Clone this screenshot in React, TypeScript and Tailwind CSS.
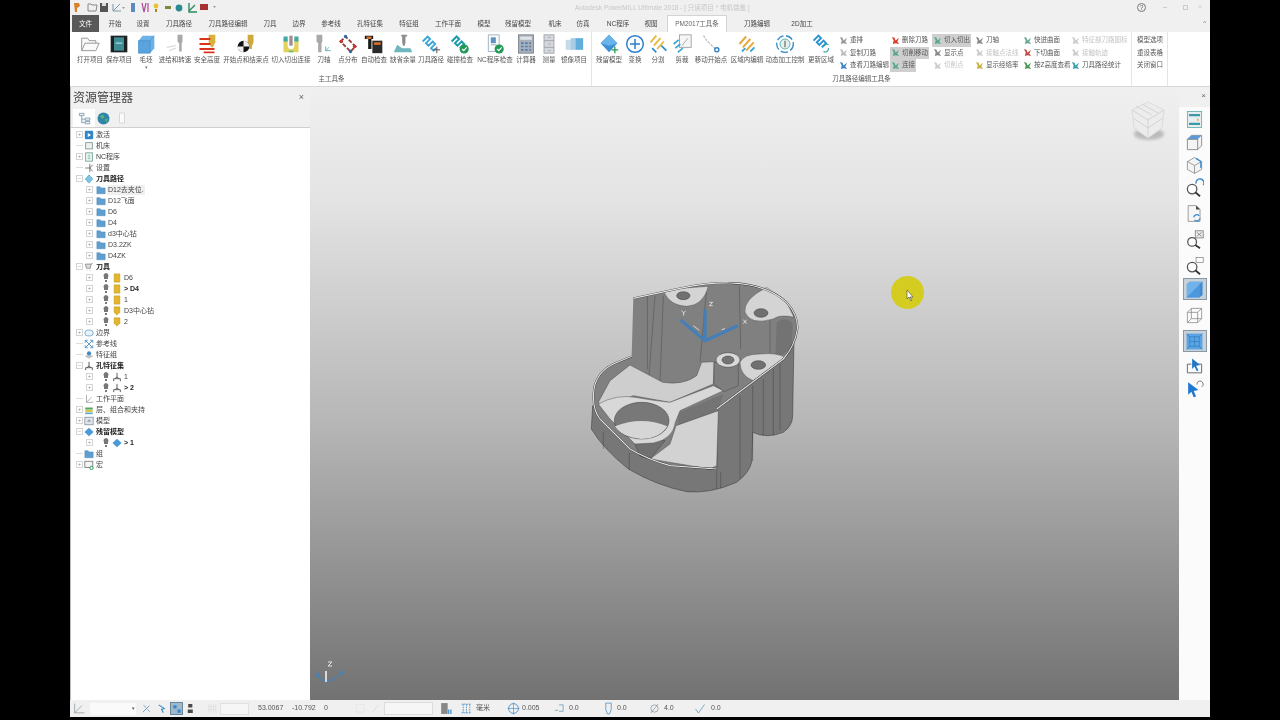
import type { ReactNode } from "react"

const tabs = [
  ["开始", 32], ["设置", 24], ["刀具路径", 48], ["刀具路径编辑", 50], ["刀具", 34], ["边界", 24], ["参考线", 40], ["孔特征集", 38],
  ["特征组", 40], ["工作平面", 38], ["模型", 34], ["残留模型", 34], ["机床", 40], ["仿真", 16],
] as const

function Svg({ s = 22, children }: { s?: number; children: ReactNode }) {
  return (
    <svg width={s} height={s} viewBox="0 0 24 24" fill="none" className="block">
      {children}
    </svg>
  )
}

const bigIcons: Record<string, ReactNode> = {
  open: <path d="M2 20V5h7l2 3h8v3M2 20l4-9h17l-4 9z" fill="#fafafa" stroke="#9a9a9a" strokeWidth="1.2" />,
  save: <g><rect x="2" y="2" width="20" height="20" fill="#1c2224" /><rect x="6" y="4" width="12" height="16" fill="#3f8c94" /><rect x="8" y="10" width="8" height="2" fill="#8cc8cc" /></g>,
  stock: <g><path d="M3 8l5-6h14v15l-5 6H3z" fill="#6cb2e6" /><path d="M3 8h14v15H3z" fill="#5aa3dc" stroke="#3d86c0" strokeWidth=".6" /><path d="M17 8l5-6" stroke="#3d86c0" strokeWidth=".6" /></g>,
  feed: <g><path d="M15 1h6v8l-1 2v10h-3V11l-2-2z" fill="#a9a9a9" /><path d="M2 16l11-2M5 20l8-3" stroke="#dcdcdc" strokeWidth="1.5" /></g>,
  safe: <g><path d="M14 1h8v9l-3 6-2 0-3-6z" fill="#d8b03a" /><path d="M3 6h13M3 12h13M3 18h18M8 22h13" stroke="#d8341c" strokeWidth="2.2" /></g>,
  start: <g><path d="M14 1h7v9l-2 5v3h-3v-3l-2-5z" fill="#cfa93c" /><circle cx="9" cy="15" r="7" fill="#111" /><path d="M9 8a7 7 0 017 7H9v7a7 7 0 01-7-7h7z" fill="#eee" /></g>,
  lead: <g><path d="M3 22V6h5v8a4 4 0 008 0V6h5v16h-5l-2-2h-4l-2 2z" fill="#e4d25c" /><path d="M3 3h5v6H3zM16 3h5v6h-5z" fill="#43a9a8" /><path d="M10 2h4v12h-4z" fill="#9b8f8f" /><path d="M9 20h6v2H9z" fill="#68b85a" /></g>,
  axis: <g><path d="M3 1h7v8l-1 2v11H5V11L3 9z" fill="#a9a9a9" /><path d="M14 20v-5M14 20h6M14 20l4-4" stroke="#4ba6a6" strokeWidth="1" /></g>,
  points: <g><path d="M3 9l6-6 12 12-6 6z" stroke="#9c3a3a" strokeWidth="2.2" strokeDasharray="5 2" /><circle cx="4" cy="9" r="2.2" fill="#c4372e" /><circle cx="20" cy="15" r="2.2" fill="#c4372e" /><circle cx="9" cy="3" r="2" fill="#2a6aa8" /><circle cx="15" cy="21" r="2" fill="#2a6aa8" /></g>,
  auto: <g><path d="M1 2h10v4H9v12H5V6H1z" fill="#1a1a1a" /><path d="M10 8h12v15H10z" fill="#2a2a2a" /><path d="M12 10h8v3h-8z" fill="#d8712a" /><path d="M3 3h6v3H3z" fill="#d8712a" /></g>,
  thick: <g><path d="M1 22l4-9 6 4h10l2 5z" fill="#6fb7bd" /><path d="M10 1h7v2h-2v7l-1 4h-2l-1-4V3h-1z" fill="#8d8d8d" /></g>,
  tp: <g><path d="M2 9l6-6 3 3-5 5 3 3 5-5 3 3-5 5 3 3 3-3" stroke="#39a6d8" strokeWidth="2.2" /><path d="M19 15v8M15 19h8" stroke="#555" strokeWidth="1.2" /></g>,
  coll: <g><path d="M2 9l6-6 3 3-5 5 3 3 5-5 3 3-5 5" stroke="#1f9aac" strokeWidth="2.4" /><circle cx="17" cy="18" r="5.5" fill="#1f9a56" /><path d="M14.5 18l2 2 3.5-4" stroke="#fff" strokeWidth="1.4" /></g>,
  nc: <g><path d="M4 1h13v20H4z" fill="#fcfcfc" stroke="#8da8bc" /><path d="M7 4h6v7H7z" fill="#5c93c0" /><path d="M7 13h7" stroke="#999" /><circle cx="17" cy="18" r="5.5" fill="#1f9a56" /><path d="M14.5 18l2 2 3.5-4" stroke="#fff" strokeWidth="1.4" /></g>,
  calc: <g><rect x="3" y="1" width="18" height="22" fill="#a8afb8" stroke="#788088" /><rect x="5" y="3" width="14" height="4" fill="#dde2e8" /><path d="M6 10h3v2H6zM11 10h3v2h-3zM16 10h2v2h-2zM6 14h3v2H6zM11 14h3v2h-3zM16 14h2v2h-2zM6 18h3v2H6zM11 18h3v2h-3zM16 18h2v2h-2z" fill="#4a7fb5" /></g>,
  measure: <g><rect x="6" y="1" width="12" height="22" fill="#d4d7dc" stroke="#9a9ea6" /><path d="M6 8h12M6 16h12M11 4h3M11 12h3M11 20h3" stroke="#9a9ea6" /></g>,
  mirror: <g><path d="M2 7h8v12H2z" fill="#c4dbe9" /><path d="M8 5h8v14H8z" fill="#a7cde4" /><path d="M14 5h9v14h-9z" fill="#62aedb" /></g>,
  model: <g><path d="M12 1l10 10-10 11L2 11z" fill="#3e8fd6" /><path d="M12 1l10 10-10 3L2 11z" fill="#6ab4ec" /><path d="M19 15v8M15 19h8" stroke="#2d9a52" strokeWidth="1.6" /></g>,
  trans: <g><circle cx="12" cy="12" r="10" fill="#fbfdff" stroke="#2c80cc" strokeWidth="1.8" /><path d="M12 6v12M6 12h12" stroke="#2c80cc" strokeWidth="1.8" /></g>,
  split: <g><path d="M3 10l7-8M7 14l8-9M11 18l8-9" stroke="#e8b83a" strokeWidth="2.2" /><path d="M5 17l5 5M16 14l6 6" stroke="#2a8dd0" strokeWidth="2" /></g>,
  trim: <g><rect x="9" y="1" width="14" height="15" fill="#f6f6f6" stroke="#9a9a9a" /><path d="M12 14l7-9" stroke="#a0a0a0" /><path d="M2 12l6-5M4 17l6-5M7 22l6-5" stroke="#39a6d8" strokeWidth="2" /></g>,
  move: <g><path d="M3 2c2 3 3 5 7 9s7 6 9 9" stroke="#b8b8b8" strokeWidth="1.4" strokeDasharray="3 1.5" /><circle cx="19" cy="19" r="2.5" fill="#fff" stroke="#2a7fc4" strokeWidth="1.6" /></g>,
  region: <g><path d="M3 12l8-9M7 16l9-10M11 20l9-10" stroke="#e8a83a" strokeWidth="2.4" /><path d="M6 21l4-4M16 21l5-5" stroke="#39a6d8" strokeWidth="2.2" /></g>,
  dyn: <g><circle cx="12" cy="12" r="10" stroke="#3b8fc8" strokeWidth="1.6" strokeDasharray="9 3" /><circle cx="12" cy="12" r="6" fill="#e4f0ee" stroke="#4ba6a6" /><path d="M12 8v8" stroke="#777" strokeWidth="1.6" /></g>,
  upd: <g><path d="M3 8l6-6 3 3-5 5 3 3 5-5 3 3-5 5" stroke="#2d93cc" strokeWidth="2.4" /><path d="M15 21a4 4 0 006-4M21 13a4 4 0 00-6 2" stroke="#2aa0a0" strokeWidth="1.4" /></g>,
}

const mainItems = [
  ["open", "打开项目", 28], ["save", "保存项目", 30], ["stock", "毛坯", 24], ["feed", "进给和转速", 34], ["safe", "安全高度", 30],
  ["start", "开始点和结束点", 48], ["lead", "切入切出连接", 42], ["axis", "刀轴", 24], ["points", "点分布", 24], ["auto", "自动检查", 28],
  ["thick", "缺省余量", 30], ["tp", "刀具路径", 26], ["coll", "碰撞检查", 32], ["nc", "NC程序检查", 38], ["calc", "计算器", 24],
  ["measure", "测量", 22], ["mirror", "镜像项目", 28],
] as const

const editItems = [
  ["model", "残留模型", 32], ["trans", "变换", 20], ["split", "分割", 26], ["trim", "剪裁", 22], ["move", "移动开始点", 36],
  ["region", "区域内编辑", 36], ["dyn", "动态加工控制", 40], ["upd", "更新区域", 32],
] as const

function BigItem({ icon, label, w }: { icon: string; label: string; w: number }) {
  return (
    <div className="flex flex-col items-center shrink-0" style={{ width: w }}>
      <div className="h-[21px] mt-[2px]"><Svg s={20}>{bigIcons[icon]}</Svg></div>
      <div className="whitespace-nowrap text-[6.5px] leading-[9px] text-[#555]">{label}</div>
      {label === "毛坯" && <div className="text-[5px] leading-[6px] text-[#777]">▾</div>}
    </div>
  )
}

type Small = { c: string; label: string; off?: boolean; on?: boolean }

const smallCols: { w: number; rows: Small[] }[] = [
  { w: 53, rows: [{ c: "#999", label: "重排" }, { c: "#bbb", label: "复制刀路" }, { c: "#3a86c8", label: "查看刀路编辑" }] },
  { w: 42, rows: [{ c: "#d8402c", label: "删除刀路" }, { c: "#5aa88c", label: "切削移动", on: true }, { c: "#5aa88c", label: "连接", on: true }] },
  { w: 41, rows: [{ c: "#5aa88c", label: "切入切出", on: true }, { c: "#888", label: "显示点" }, { c: "#ccc", label: "切削点", off: true }] },
  { w: 48, rows: [{ c: "#888", label: "刀轴" }, { c: "#ccc", label: "接触点法线", off: true }, { c: "#c8b040", label: "显示经络率" }] },
  { w: 48, rows: [{ c: "#6aa890", label: "快进曲面" }, { c: "#c44c4c", label: "下切曲面" }, { c: "#4c9a50", label: "按Z高度查看" }] },
  { w: 62, rows: [{ c: "#ccc", label: "特征部刀路图标", off: true }, { c: "#ccc", label: "接触轨迹", off: true }, { c: "#3aa0b0", label: "刀具路径统计" }] },
]

function SmallRow({ c, label, off, on }: Small) {
  return (
    <div className={`flex items-center h-[12.5px] w-fit px-[1px] gap-[2px] whitespace-nowrap text-[6.5px] ${on ? "bg-[#cfcfcf]" : ""} ${off ? "text-[#c4c4c4]" : "text-[#555]"}`}>
      <svg width="9" height="9" viewBox="0 0 10 10" className="shrink-0">
        <path d="M1 1l3 1 1 3 4-3-2 4 2 3-4-1-3 1 1-4z" fill={c} />
      </svg>
      {label}
    </div>
  )
}

type Row = { t: string; kind: string; depth?: 0 | 1 | 2; exp?: "+" | "-" | ""; bold?: boolean; hl?: boolean }

const tree: Row[] = [
  { t: "激活", kind: "play", exp: "+" },
  { t: "机床", kind: "box" },
  { t: "NC程序", kind: "doc", exp: "+" },
  { t: "设置", kind: "set" },
  { t: "刀具路径", kind: "path", exp: "-", bold: true },
  { t: "D12去夹位.", kind: "folder", depth: 1, exp: "+", hl: true },
  { t: "D12飞面", kind: "folder", depth: 1, exp: "+" },
  { t: "D6", kind: "folder", depth: 1, exp: "+" },
  { t: "D4", kind: "folder", depth: 1, exp: "+" },
  { t: "d3中心钻", kind: "folder", depth: 1, exp: "+" },
  { t: "D3.2ZK", kind: "folder", depth: 1, exp: "+" },
  { t: "D4ZK", kind: "folder", depth: 1, exp: "+" },
  { t: "刀具", kind: "cart", exp: "-", bold: true },
  { t: "D6", kind: "tool", depth: 2, exp: "+" },
  { t: "> D4", kind: "tool", depth: 2, exp: "+", bold: true },
  { t: "1", kind: "tool", depth: 2, exp: "+" },
  { t: "D3中心钻", kind: "tool2", depth: 2, exp: "+" },
  { t: "2", kind: "tool2", depth: 2, exp: "+" },
  { t: "边界", kind: "bound", exp: "+" },
  { t: "参考线", kind: "ref" },
  { t: "特征组", kind: "feat" },
  { t: "孔特征集", kind: "hole", exp: "-", bold: true },
  { t: "1", kind: "hole", depth: 2, exp: "+" },
  { t: "> 2", kind: "hole", depth: 2, exp: "+", bold: true },
  { t: "工作平面", kind: "wp" },
  { t: "层、组合和夹持", kind: "layer", exp: "+" },
  { t: "模型", kind: "mdl", exp: "+" },
  { t: "残留模型", kind: "dia", exp: "-", bold: true },
  { t: "> 1", kind: "dia", depth: 2, exp: "+", bold: true },
  { t: "组", kind: "folder" },
  { t: "宏", kind: "macro", exp: "+" },
]

const treeIcons: Record<string, ReactNode> = {
  play: <g><rect x="2" y="2" width="20" height="20" rx="3" fill="#2f86c8" /><path d="M9 7l8 5-8 5z" fill="#fff" /></g>,
  box: <rect x="4" y="4" width="16" height="15" fill="#eef3f2" stroke="#78908e" strokeWidth="2" />,
  doc: <g><rect x="4" y="2" width="16" height="20" fill="#f0f6f4" stroke="#6d9a94" strokeWidth="2" /><path d="M9 8h6M9 12h6M9 16h6" stroke="#4b8" strokeWidth="1.6" /></g>,
  set: <path d="M14 2v20M14 12l7-8M14 12l7 8M14 12H3" stroke="#666" strokeWidth="2" />,
  path: <path d="M12 2l9 10-9 10-9-10z" fill="#7cc4e4" stroke="#4b9cc8" strokeWidth="2" strokeDasharray="4 2" />,
  folder: <path d="M2 21V4h8l2 3h10v14z" fill="#5f9fd0" stroke="#3d7fb4" />,
  cart: <path d="M3 5h14l-2 10H6zM17 5l4-2M7 20h1M14 20h1" stroke="#888" strokeWidth="2" fill="#ddd" />,
  tool: <path d="M5 2h14v20H5z" fill="#e3b62c" stroke="#b8901c" />,
  tool2: <path d="M5 2h14v13l-7 7-7-7z" fill="#e3b62c" stroke="#b8901c" />,
  bound: <rect x="2" y="5" width="20" height="14" rx="7" fill="#e8f3fa" stroke="#6aa6cc" strokeWidth="2" />,
  ref: <path d="M4 4l16 16M20 4L4 20M3 3h6M3 3v6M21 3h-6M21 3v6M3 21h6M3 21v-6M21 21h-6M21 21v-6" stroke="#3c8ac8" strokeWidth="2" />,
  feat: <g><path d="M2 15l10-7 10 7-10 6z" fill="#c4c4c4" /><circle cx="12" cy="8" r="5" fill="#3c8ac8" /></g>,
  hole: <path d="M12 2v10M4 22v-6h16v6M12 12l-5 4M12 12l5 4" stroke="#555" strokeWidth="2.2" />,
  wp: <path d="M6 2v18h16M6 20l12-12" stroke="#999" strokeWidth="1.8" />,
  layer: <g><path d="M3 6h18v5H3z" fill="#5aa65a" /><path d="M3 12h18v5H3z" fill="#d8c84a" /><path d="M3 18h18v4H3z" fill="#5ea6d8" /></g>,
  mdl: <g><rect x="2" y="3" width="20" height="18" fill="#dfe5ea" stroke="#8a949c" strokeWidth="2" /><path d="M7 14l5-6 5 6z" fill="#8aa0b4" /></g>,
  dia: <path d="M12 2l11 10-11 10L1 12z" fill="#4a9ada" />,
  macro: <g><rect x="2" y="3" width="19" height="15" fill="#f4f4f4" stroke="#777" strokeWidth="2" /><circle cx="18" cy="19" r="4" fill="#fff" stroke="#2d9a52" strokeWidth="2.4" /></g>,
}

function TreeRow({ r }: { r: Row }) {
  const d = r.depth ?? 0
  return (
    <div className="flex items-center h-[11px] relative">
      <div className={`${d === 0 ? "w-[2px]" : "w-[12px]"} shrink-0`} />
      {r.exp ? (
        <div className="w-[7px] h-[7px] shrink-0 border border-[#d4d4d4] text-[#999] text-[6px] leading-[5px] text-center">{r.exp === "+" ? "+" : "–"}</div>
      ) : (
        <div className="w-[7px] h-px shrink-0 bg-[#ddd]" />
      )}
      {d === 2 && (
        <div className="ml-[10px] w-[8px] shrink-0">
          <svg width="6" height="9" viewBox="0 0 6 9"><path d="M3 0a2.6 2.6 0 012 4v2H1V4a2.6 2.6 0 012-4zM2 7h2v2H2z" fill="#777" /></svg>
        </div>
      )}
      <div className={`${d === 1 ? "ml-[3px]" : "ml-[1px]"} shrink-0`}><Svg s={10}>{treeIcons[r.kind]}</Svg></div>
      <div className={`${d === 0 ? "ml-[1px]" : "ml-[1px]"} px-[1px] whitespace-nowrap text-[7px] leading-[10px] ${r.bold ? "font-bold text-[#222]" : "text-[#444]"} ${r.hl ? "bg-[#f0f0f0]" : ""}`}>{r.t}</div>
    </div>
  )
}

const rimPath = "M190 88L330 58Q420 40 480 42 590 45 650 100 685 140 682 180 675 230 640 270L440 420M440 600L300 590Q230 570 180 540L90 450Q65 420 72 360 80 310 130 285L185 262"

function Model() {
  return (
    <svg viewBox="0 0 750 705" className="absolute left-[260px] top-[182px] w-[250px] h-[235px]">
      {/* outer lower body */}
      <path d="M68 410L64 480Q100 540 175 600 260 650 350 668 420 675 500 640 540 610 546 575L548 490Q590 510 640 490 668 470 668 440L672 210 640 270 440 420 440 600 300 590 180 540z" fill="#777" stroke="#333" strokeWidth="1.5" />
      <path d="M100 490v50M178 552v50M440 420v240M452 610v48M510 380v250M548 350v225M580 330v170M630 285v200M610 300v200" stroke="#3a3a3a" strokeWidth="1.2" />
      {/* pocket walls */}
      <path d="M190 88L330 58Q420 40 480 42 590 45 650 100 685 140 682 180 675 230 640 270L440 420 440 600 300 590Q230 570 180 540L90 450Q65 420 72 360 80 310 130 285L185 262z" fill="#808080" />
      <path d="M232 82v220M255 80l-18 240M280 80l-10 260M410 60l-20 220M512 240l-4-190M600 100v170" stroke="#3f3f3f" strokeWidth="1.2" />
      <path d="M620 160q30-20 48 5l-2 70-50 40z" fill="#737373" />
      {/* floors */}
      <path d="M85 400L120 335 180 288 278 340Q340 350 380 320L395 280 432 278 430 345 300 400 190 380 100 412z" fill="#cecece" stroke="#3a3a3a" strokeWidth="1.2" />
      <path d="M322 432L460 375 445 425 325 470z" fill="#747474" />
      <path d="M445 425L440 590 420 600 240 570 300 525 318 470z" fill="#d2d2d2" stroke="#3a3a3a" strokeWidth="1.2" />
      <path d="M195 525q50-20 90-10l-45 55-30-8z" fill="#707070" stroke="#3a3a3a" strokeWidth="1.2" />
      {/* big ring */}
      <path d="M85 405Q140 375 195 385 250 395 300 400L430 350 460 365 330 425 316 460Q310 510 250 522L195 525 120 450z" fill="#d8d8d8" stroke="#3a3a3a" strokeWidth="1.2" />
      <ellipse cx="215" cy="455" rx="82" ry="55" fill="#787878" stroke="#3a3a3a" strokeWidth="1.5" />
      <path d="M135 472Q215 440 292 472 270 508 215 510 155 505 135 472z" fill="#d6d6d6" />
      {/* bosses */}
      <path d="M282 70Q300 110 350 112 400 110 415 52L330 58z" fill="#d4d4d4" stroke="#3a3a3a" strokeWidth="1.2" />
      <ellipse cx="340" cy="80" rx="20" ry="12" fill="#707070" stroke="#3a3a3a" strokeWidth="1.5" />
      <path d="M590 55Q520 90 525 130 540 170 610 150 630 135 672 145L650 100z" fill="#d4d4d4" stroke="#3a3a3a" strokeWidth="1.2" />
      <ellipse cx="573" cy="132" rx="21" ry="13" fill="#707070" stroke="#3a3a3a" strokeWidth="1.5" />
      <path d="M432 280V345L462 368 505 350 505 280z" fill="#7e7e7e" stroke="#3a3a3a" strokeWidth="1.2" />
      <path d="M510 280Q520 255 570 255 620 250 645 265L550 335Q510 320 510 280z" fill="#d4d4d4" stroke="#3a3a3a" strokeWidth="1.2" />
      <ellipse cx="565" cy="288" rx="22" ry="13" fill="#707070" stroke="#3a3a3a" strokeWidth="1.5" />
      <ellipse cx="474" cy="273" rx="36" ry="22" fill="#d8d8d8" stroke="#3a3a3a" strokeWidth="1.5" />
      <ellipse cx="474" cy="273" rx="18" ry="12" fill="#747474" stroke="#3a3a3a" strokeWidth="1.5" />
      {/* rim */}
      <path d={rimPath} fill="none" stroke="#2a2a2a" strokeWidth="5.5" />
      <path d={rimPath} fill="none" stroke="#e4e4e4" strokeWidth="3.5" />
      {/* triad */}
      <path d="M405 125V215M405 215L335 155M405 215L500 172" stroke="#3d7fc2" strokeWidth="10" opacity=".85" strokeLinecap="round" />
      <path d="M370 170l18 14M455 182l10-3M418 100h10l-10 10h10M335 125l6 7 6-7M341 132v8M520 152l10 12M530 152l-10 12" stroke="#e8e8e8" strokeWidth="2.5" fill="none" />
    </svg>
  )
}

const rightIcons: [ReactNode, boolean, string][] = [
  [<g><rect x="3" y="2" width="18" height="20" fill="#e8eef0" stroke="#5aa" /><path d="M5 5h14v3H5zM5 16h14v3H5z" fill="#3a9aa8" /><path d="M15 10l3 3-2 1z" fill="#d8a030" /></g>, false, "mt-0"],
  [<g><path d="M3 8l5-5h13v13l-5 5H3z" fill="#f4f4f4" stroke="#777" /><path d="M3 8l5-5h13l-5 5z" fill="#5a9ad8" /><path d="M16 8v13M3 8h13" stroke="#777" /></g>, false, "mt-[3px]"],
  [<g><path d="M12 2l9 5v10l-9 5-9-5V7z" fill="#f4f4f4" stroke="#888" /><path d="M3 7l9 5 9-5M12 12v10" stroke="#888" /><path d="M14 3l6 4v8" stroke="#3a8ad0" strokeWidth="1.6" /></g>, false, "mt-[3px]"],
  [<g><circle cx="9" cy="14" r="6" fill="#fff" stroke="#555" strokeWidth="1.6" /><path d="M13 18l6 5" stroke="#333" strokeWidth="2.2" /><path d="M14 7a5 5 0 119 2" stroke="#3a8ad0" strokeWidth="1.8" /></g>, false, "mt-[2px]"],
  [<g><path d="M4 2h10l5 5v15H4z" fill="#f6f6f6" stroke="#888" /><path d="M14 2v5h5z" fill="#444" /><path d="M11 17a4 4 0 017-2M19 18a4 4 0 01-7 2" stroke="#3a8ad0" strokeWidth="1.6" /></g>, false, "mt-[6px]"],
  [<g><circle cx="9" cy="15" r="5.5" fill="#fff" stroke="#555" strokeWidth="1.6" /><path d="M13 19l6 4" stroke="#333" strokeWidth="2.2" /><rect x="13" y="1" width="10" height="9" fill="#eee" stroke="#777" /><path d="M15 3l6 5M21 3l-6 5" stroke="#777" /></g>, false, "mt-[6px]"],
  [<g><circle cx="9" cy="14" r="6" fill="#fff" stroke="#555" strokeWidth="1.6" /><path d="M13 18l6 5" stroke="#333" strokeWidth="2.2" /><rect x="14" y="2" width="9" height="6" fill="#fff" stroke="#888" /></g>, false, "mt-[6px]"],
  [<g><path d="M2 5l4-3h16v17l-4 3H2z" fill="#72b2ea" /><path d="M18 6l4-4v17l-4 3z" fill="#3f8cd0" /><path d="M2 22L18 6v16z" fill="#4c98dc" /></g>, true, "mt-[4px]"],
  [<path d="M3 8l5-5h13v13l-5 5H3zM3 8h13v13M16 8l5-5M8 3v13h13M8 16l-5 5" stroke="#8a8a8a" strokeWidth="1" />, false, "mt-[6px]"],
  [<g><path d="M2 2h20v20H2z" fill="#5aa4e4" /><path d="M6 6h12v12H6zM2 2l4 4M22 2l-4 4M2 22l4-4M22 22l-4-4M12 6v12M6 12h12" stroke="#2f78b8" strokeWidth=".8" /></g>, true, "mt-[6px]"],
  [<g><path d="M3 9h5M16 9h5v11H3V9" stroke="#666" strokeWidth="1.2" /><path d="M9 2l10 8-5 1 3 6-2 1-3-6-3 3z" fill="#1f78c8" /></g>, false, "mt-[5px]"],
  [<g><path d="M4 4l13 10-6 1 3 7-3 1-3-7-4 4z" fill="#1f78d0" /><path d="M15 7a4 4 0 116 3" stroke="#777" strokeWidth="1.2" /></g>, false, "mt-[2px]"],
]

function Stat({ ml, w, children }: { ml: number; w?: number; children: ReactNode }) {
  return <div className="flex items-center shrink-0 whitespace-nowrap" style={{ marginLeft: ml, width: w }}>{children}</div>
}

export default function App() {
  return (
    <div className="w-[1280px] h-[720px] bg-black overflow-hidden flex justify-center font-['Liberation_Sans','Noto_Sans_CJK_SC',sans-serif] blur-[0.35px]">
      <div className="w-[1140px] h-[717px] flex flex-col bg-[#f0f0f0] text-[#555]">
        {/* title bar */}
        <div className="h-[15px] flex items-center pl-[3px] relative shrink-0">
          <svg width="150" height="11" viewBox="0 0 150 11" className="shrink-0">
            <path d="M1 1h5l1 3-3 2v4H2z" fill="#d8802a" />
            <path d="M15 9V2h3l1 1h5l-1 6z" fill="none" stroke="#888" />
            <path d="M27 1h8v9h-8z" fill="#555" /><path d="M29 1h4v3h-4z" fill="#ddd" />
            <path d="M40 9l7-7M40 2v7h8" stroke="#7a9aa8" fill="none" />
            <path d="M49 5h3l-1.5 2z" fill="#999" />
            <path d="M58 1h4v9h-4z" fill="#5a8ac0" />
            <path d="M69 1l2 9 2-9M75 1v9" stroke="#b04a9a" strokeWidth="1.2" fill="none" />
            <circle cx="83" cy="4" r="2.4" fill="#e8c030" /><path d="M82 7h2v3h-2z" fill="#aa8a20" />
            <path d="M92 4h6v3h-6z" fill="#7a8a3a" /><circle cx="106" cy="6" r="3.4" fill="#2a8a90" />
            <path d="M116 1v9h8M116 9l6-6" stroke="#2a8a60" strokeWidth="1.4" fill="none" />
            <path d="M127 2h8v6h-8z" fill="#a83030" />
            <path d="M140 4h3l-1.5 2z" fill="#999" />
          </svg>
          <div className="ml-[352px] text-[6.5px] text-[#c8c8c8] whitespace-nowrap">Autodesk PowerMILL Ultimate 2018 - [ 只读项目 * 电机端盖 ]</div>
          <div className="ml-auto mr-[8px] flex items-center">
            <div className="w-[9px] h-[9px] rounded-full border border-[#777] text-[7px] leading-[7px] text-center text-[#666]">?</div>
            <div className="ml-[17px] w-[4px] h-px bg-[#ccc]" />
            <div className="ml-[16px] w-[5px] h-[5px] border border-[#ccc]" />
            <div className="ml-[10px] text-[7px] text-[#ccc]">×</div>
          </div>
        </div>

        {/* tabs */}
        <div className="h-[17px] flex items-stretch pl-[2px] shrink-0 text-[6.5px] text-[#444]">
          <div className="w-[27px] bg-[#595959] text-white flex items-center justify-center">文件</div>
          {tabs.map(([t, w]) => (
            <div key={t} className="flex items-center justify-center whitespace-nowrap shrink-0" style={{ width: w }}>{t}</div>
          ))}
          <div className="w-[54px] flex items-center justify-center">NC程序</div>
          <div className="w-[12px] flex items-center justify-center whitespace-nowrap">视图</div>
          <div className="ml-[10px] w-[60px] bg-white border border-b-0 border-[#d4d4d4] flex items-center justify-center text-[#666]">PM2017工具条</div>
          <div className="w-[60px] flex items-center justify-center">刀路编辑</div>
          <div className="w-[30px] flex items-center justify-center">2D加工</div>
          <div className="ml-auto mr-[4px] flex items-center text-[6px] text-[#777]">^</div>
        </div>

        {/* ribbon */}
        <div className="h-[55px] bg-white border-b border-[#d8d8d8] flex shrink-0 pl-[2px]">
          <div className="w-[520px] border-r border-[#e4e4e4] flex flex-col shrink-0">
            <div className="flex flex-1 pl-[4px]">
              {mainItems.map(([i, l, w]) => <BigItem key={l} icon={i} label={l} w={w} />)}
            </div>
            <div className="text-center text-[6.5px] leading-[10px] pb-[2px] text-[#555]">主工具条</div>
          </div>
          <div className="w-[540px] border-r border-[#e4e4e4] flex flex-col shrink-0">
            <div className="flex flex-1 pl-px">
              {editItems.map(([i, l, w]) => <BigItem key={l} icon={i} label={l} w={w} />)}
              <div className="flex pt-[2px]">
                {smallCols.map((col, i) => (
                  <div key={i} className={`shrink-0 ${i === 0 || i === 3 || i === 4 || i === 5 ? "pl-[1px]" : ""}`} style={{ width: col.w }}>
                    {col.rows.map((r) => <SmallRow key={r.label} {...r} />)}
                  </div>
                ))}
              </div>
            </div>
            <div className="text-center text-[6.5px] leading-[10px] pb-[2px] text-[#555]">刀具路径编辑工具条</div>
          </div>
          <div className="w-[36px] border-r border-[#e4e4e4] shrink-0 pl-[5px] pt-[2px] text-[6.5px] leading-[12.5px] text-[#555] whitespace-nowrap">
            <div>模型选项</div>
            <div>重设表格</div>
            <div>关闭窗口</div>
          </div>
        </div>

        {/* main */}
        <div className="flex flex-1 min-h-0">
          <div className="w-[240px] shrink-0 flex flex-col border-l border-[#bdbdbd]">
            <div className="h-[22px] flex items-center justify-between pl-[2px] pr-[6px] text-[12px] text-[#444]">
              资源管理器
              <span className="text-[9px] text-[#666]">×</span>
            </div>
            <div className="h-[19px] flex items-end pl-[2px] border-b border-[#cfcfcf]">
              <div className="w-[22px] h-[18px] bg-white flex items-center justify-center">
                <Svg s={14}><path d="M4 4h8v4H4zM8 8v12h6M8 14h6M14 12h8v4h-8zM14 18h8v4h-8z" fill="#e6f0f6" stroke="#6f8ea0" strokeWidth="1.2" /></Svg>
              </div>
              <div className="w-[16px] h-[18px] flex items-center justify-center">
                <Svg s={13}><circle cx="12" cy="12" r="11" fill="#2f86a8" /><path d="M5 8l6-3 3 4-4 4zM14 14l6-2-2 7z" fill="#5cb07a" /></Svg>
              </div>
              <div className="w-[22px] h-[18px] flex items-center justify-center">
                <Svg s={12}><path d="M7 2h10v20H7z" fill="#fafafa" stroke="#d0d0d0" strokeWidth="1.6" /></Svg>
              </div>
            </div>
            <div className="flex-1 bg-white pt-[1px] pl-[3px]">
              {tree.map((r, i) => <TreeRow key={i} r={r} />)}
            </div>
          </div>

          <div className="flex-1 relative overflow-hidden bg-[linear-gradient(to_bottom,#f0f0f0_0%,#e4e4e4_18%,#b6b6b6_55%,#727272_100%)]">
            <Model />
            {/* view cube */}
            <svg viewBox="0 0 44 46" fill="none" className="absolute left-[816px] top-[11px] w-[44px] h-[46px]">
              <defs><filter id="s"><feGaussianBlur stdDeviation="1.6" /></filter></defs>
              <ellipse cx="23" cy="36" rx="15" ry="6" fill="#bbb" filter="url(#s)" />
              <path d="M6 12L22 4 38 12 36 30 22 40 8 30z" fill="#ececec" stroke="#dcdcdc" />
              <path d="M6 12L22 22 38 12M22 22V40M10 8l16 9M16 6l16 9M7 20l15 10M37 20L22 30" stroke="#d4d4d4" />
            </svg>
            {/* mouse highlight */}
            <div className="absolute left-[581px] top-[189px] w-[33px] h-[33px] rounded-full bg-[#d4cc20] blur-[0.6px] flex items-center justify-center">
              <svg width="8" height="12" viewBox="0 0 8 12" className="ml-[4px] mt-[6px]"><path d="M1 0v9l2-2 2 4 1-1-2-3h3z" fill="#fff" stroke="#444" strokeWidth=".6" /></svg>
            </div>
            {/* corner triad */}
            <svg width="36" height="28" viewBox="0 0 36 28" fill="none" className="absolute left-[-1px] top-[573px]">
              <path d="M9 15q2 6 9 6t10-6" stroke="#4a80b0" strokeWidth="2" opacity=".7" />
              <circle cx="9" cy="15" r="2.4" fill="#4a80b0" opacity=".8" />
              <circle cx="32" cy="13" r="2.4" fill="#4a80b0" opacity=".8" />
              <path d="M17 22V11" stroke="#f2f2f2" strokeWidth="1.6" />
              <path d="M19 2h4l-4 4h4" stroke="#e4e4e4" strokeWidth="1" />
            </svg>
          </div>

          <div className="w-[31px] shrink-0 flex flex-col items-center bg-[#f0f0f0]">
            <div className="h-[20px] w-full text-right pr-[4px] text-[8px] leading-[18px] text-[#666]">×</div>
            <div className="w-full bg-[#fbfbfb] flex-1 flex flex-col items-center pt-[2px]">
              {rightIcons.map(([ic, sel, mt], i) => (
                <div key={i} className={`${mt} w-[22px] h-[20px] flex items-center justify-center ${sel ? "bg-[#c8d0d8] outline outline-1 outline-[#8a98a4]" : ""}`}>
                  <Svg s={19}>{ic}</Svg>
                </div>
              ))}
            </div>
          </div>
        </div>

        {/* status bar */}
        <div className="h-[17px] shrink-0 flex items-center text-[7px] text-[#555] bg-[#f0f0f0]">
          <div className="ml-[3px]"><Svg s={13}><path d="M3 3v17h18M3 20L16 7" stroke="#8a9aa0" strokeWidth="1.4" /></Svg></div>
          <div className="ml-[4px] w-[46px] h-[12px] bg-[#fafafa] flex items-center justify-end pr-[1px] text-[5px]">▾</div>
          <Stat ml={5}><Svg s={11}><path d="M4 20L18 6M6 5l5 5M14 14l5 5" stroke="#6a98b8" strokeWidth="2" /></Svg></Stat>
          <Stat ml={4}><Svg s={11}><path d="M6 4l12 8-6 2 4 7" stroke="#3a8ac8" strokeWidth="2.4" /></Svg></Stat>
          <div className="ml-[3px] w-[13px] h-[13px] bg-[#9fb8cc] border border-[#6a8498] flex items-center justify-center"><Svg s={10}><path d="M3 3h8v8H3zM13 13h8v8h-8z" fill="#3a86c8" /></Svg></div>
          <Stat ml={2}><Svg s={11}><path d="M7 2h9v8H7zM6 14h11v8H6z" fill="#4a4a4a" /></Svg></Stat>
          <Stat ml={11}><Svg s={11}><path d="M4 3v18M9 3v18M14 3v18M19 3v18M3 8h18M3 14h18" stroke="#d8d8d8" /></Svg></Stat>
          <div className="ml-[2px] w-[29px] h-[12px] bg-[#f6f6f6] border border-[#e0e0e0]" />
          <div className="ml-[9px] w-[34px]">53.0067</div>
          <div className="w-[32px]">-10.792</div>
          <div className="w-[26px]">0</div>
          <Stat ml={5}><Svg s={11}><rect x="3" y="3" width="17" height="17" stroke="#ccc" strokeDasharray="2 2" /></Svg></Stat>
          <Stat ml={4}><Svg s={11}><path d="M6 20L18 4" stroke="#ccc" /></Svg></Stat>
          <div className="ml-[3px] w-[49px] h-[13px] bg-[#f6f6f6] border border-[#dcdcdc]" />
          <Stat ml={6}><Svg s={13}><path d="M4 2h12v20H4z" fill="#888" /><path d="M17 14h2v8h-2zM21 14h2v8h-2z" fill="#2a7fc4" /></Svg></Stat>
          <Stat ml={8}><Svg s={13}><path d="M3 4h18M3 20h18M6 4v16M12 4v16M18 4v16" stroke="#3a86c4" strokeDasharray="3 1.5" strokeWidth="1.4" /></Svg></Stat>
          <Stat ml={3} w={28}>毫米</Stat>
          <Stat ml={3}><Svg s={13}><circle cx="12" cy="12" r="9" stroke="#2a7fc4" strokeWidth="1.4" /><path d="M12 1v22M1 12h22" stroke="#2a7fc4" /></Svg></Stat>
          <Stat ml={2} w={28}>0.005</Stat>
          <Stat ml={4}><Svg s={11}><path d="M2 16h7M11 4h9v14h-9" stroke="#4a8ab8" strokeWidth="1.4" /></Svg></Stat>
          <Stat ml={4} w={33}>0.0</Stat>
          <Stat ml={0}><Svg s={13}><path d="M7 2h10v12l-3 8h-4l-3-8z" stroke="#4a8ab8" strokeWidth="1.4" /></Svg></Stat>
          <Stat ml={2} w={32}>0.0</Stat>
          <Stat ml={0}><Svg s={11}><circle cx="12" cy="12" r="8" stroke="#7a8a94" strokeWidth="1.4" /><path d="M4 22L20 2" stroke="#7a8a94" strokeWidth="1.4" /></Svg></Stat>
          <Stat ml={4} w={30}>4.0</Stat>
          <Stat ml={0}><Svg s={12}><path d="M3 12l6 8L21 3" stroke="#5a9ac0" strokeWidth="1.6" /></Svg></Stat>
          <Stat ml={5}>0.0</Stat>
        </div>
      </div>
    </div>
  )
}
